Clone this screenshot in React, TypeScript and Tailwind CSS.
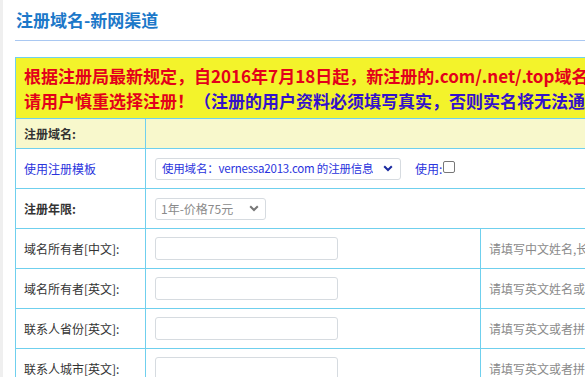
import React from "react";

const font = { fontFamily: '"Microsoft YaHei", "Noto Sans CJK SC", "Noto Sans", sans-serif' };

function Chevron({ color = "#333" }: { color?: string }) {
  return (
    <svg width="10" height="7" viewBox="0 0 10 7" className="shrink-0">
      <path d="M1.2 1.2 L5 5 L8.8 1.2" fill="none" stroke={color} strokeWidth="2" />
    </svg>
  );
}

function Row({ label, hint, bold }: { label: string; hint: string; bold?: boolean }) {
  return (
    <tr className="h-[40px]">
      <td className={`border border-[#6fd0ee] pl-[8px] text-[12px] text-[#333] ${bold ? "font-semibold" : ""}`}>{label}</td>
      <td className="border border-[#6fd0ee] pl-[9px]">
        <div className="h-[23px] w-[183px] rounded-[3px] border border-[#d6dbe0] bg-white" />
      </td>
      <td className="border border-[#6fd0ee] pl-[8px] text-[12px] text-[#8a8a8a] whitespace-nowrap overflow-hidden">{hint}</td>
    </tr>
  );
}

export default function App() {
  return (
    <div className="relative h-[377px] w-[585px] overflow-hidden bg-white" style={font}>
      <div className="absolute left-0 top-0 h-full w-[3px] bg-[#efefef]" />
      <div className="pl-[15px]">
        <div className="h-[41px] border-b border-[#a9c8f2] w-[700px]">
          <h1 className="pt-[8px] pl-[1px] text-[17px] leading-[24px] font-bold text-[#1c78c9]">注册域名-新网渠道</h1>
        </div>
        <div className="h-[16px]" />
        <table className="w-[760px] border-collapse table-fixed">
          <colgroup>
            <col className="w-[130px]" />
            <col className="w-[335px]" />
            <col />
          </colgroup>
          <tbody>
            <tr className="h-[61px] bg-[#f3f32b]">
              <td colSpan={3} className="border border-[#6fd0ee] pl-[8px] whitespace-nowrap overflow-hidden">
                <div className="text-[17px] leading-[25px] font-bold text-[#e3001b]">
                  根据注册局最新规定，自2016年7月18日起，新注册的.com/.net/.top域名需要实名认证
                </div>
                <div className="text-[17px] leading-[25px] font-bold">
                  <span className="text-[#e3001b]">请用户慎重选择注册！</span>
                  <span className="text-[#3311cc]">（注册的用户资料必须填写真实，否则实名将无法通过）</span>
                </div>
              </td>
            </tr>
            <tr className="h-[30px] bg-[#f8f8cc]">
              <td className="border border-[#6fd0ee] pl-[8px] text-[12px] font-semibold text-[#333]">注册域名:</td>
              <td colSpan={2} className="border border-[#6fd0ee]" />
            </tr>
            <tr className="h-[40px]">
              <td className="border border-[#6fd0ee] pl-[8px] text-[12px] text-[#2a33dd]">使用注册模板</td>
              <td colSpan={2} className="border border-[#6fd0ee] pl-[9px]">
                <div className="flex items-center">
                  <div className="flex h-[22px] w-[246px] items-center justify-between gap-[6px] rounded-[3px] border border-[#d6dbe0] bg-white pl-[6px] pr-[7px]">
                    <span className="overflow-hidden text-[11.5px] tracking-[-0.2px] text-[#2a33dd] whitespace-nowrap">使用域名：vernessa2013.com 的注册信息</span>
                    <Chevron color="#1a2aa0" />
                  </div>
                  <span className="ml-[14px] text-[12px] text-[#2a33dd]">使用:</span>
                  <span className="ml-[1px] mb-[4px] inline-block h-[12px] w-[12px] rounded-[2px] border border-[#777] bg-white" />
                </div>
              </td>
            </tr>
            <tr className="h-[40px]">
              <td className="border border-[#6fd0ee] pl-[8px] text-[12px] font-semibold text-[#333]">注册年限:</td>
              <td colSpan={2} className="border border-[#6fd0ee] pl-[9px]">
                <div className="flex h-[22px] w-[111px] items-center justify-between rounded-[3px] border border-[#d6dbe0] bg-white pl-[5px] pr-[6px]">
                  <span className="text-[12px] text-[#8a8a8a] whitespace-nowrap">1年-价格75元</span>
                  <Chevron color="#777" />
                </div>
              </td>
            </tr>
            <Row label="域名所有者[中文]:" hint="请填写中文姓名,长度不超过" />
            <Row label="域名所有者[英文]:" hint="请填写英文姓名或者拼音" />
            <Row label="联系人省份[英文]:" hint="请填写英文或者拼音" />
            <Row label="联系人城市[英文]:" hint="请填写英文或者拼音" />
          </tbody>
        </table>
      </div>
    </div>
  );
}
